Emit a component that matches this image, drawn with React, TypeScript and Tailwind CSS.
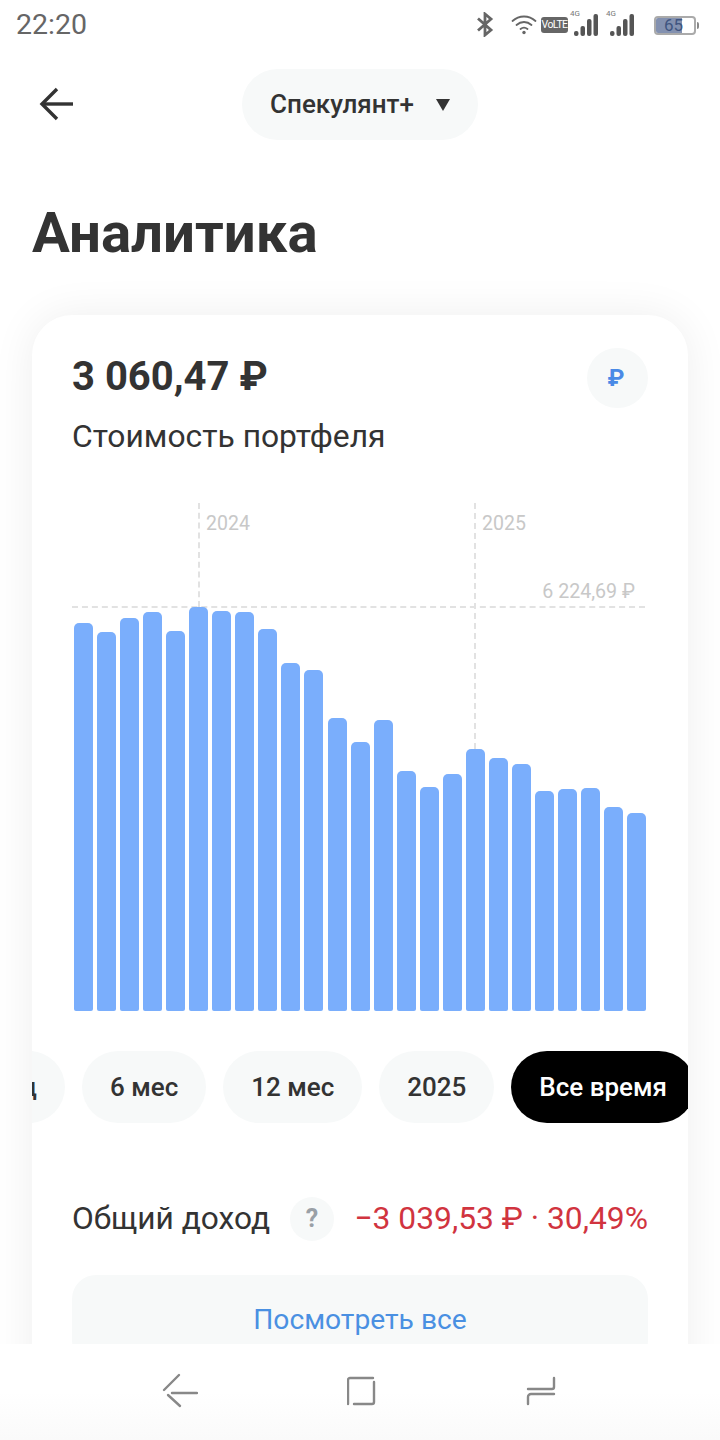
const bars = [623, 632, 618, 612, 631, 607, 611, 612, 629, 663, 670, 718, 742, 720, 771, 787, 774, 749, 758, 764, 791, 789, 788, 807, 813];
const periods = ['Месяц', '6 мес', '12 мес', '2025'];

function Signal() {
  return (
    <div className="relative h-[22px] w-[24px]">
      <span className="absolute -left-[4px] -top-[5px] text-[8px] leading-[10px] text-[#777]">4G</span>
      <svg width="24" height="22" viewBox="0 0 24 22" fill="#555">
        <rect x="0" y="17" width="4.500" height="5" rx="2" />
        <rect x="6.500" y="12" width="4.500" height="10" rx="2" />
        <rect x="13" y="5" width="4.500" height="17" rx="2" />
        <rect x="19.500" y="0" width="4.500" height="22" rx="2" />
      </svg>
    </div>
  );
}

function StatusBar() {
  return (
    <div className="flex h-[50px] items-center justify-between pl-4 pr-[21px] text-[#666]">
      <span className="text-[28.500px] leading-none">22:20</span>
      <div className="flex items-center">
        <svg width="18" height="25" viewBox="0 0 18 25" fill="none" stroke="#666" strokeWidth="2.800" className="mb-[1px]">
          <path d="M2 6.500l13 11.500-6 5V2l6 5L2 18.500" />
        </svg>
        <svg width="26" height="20" viewBox="0 0 26 20" fill="none" stroke="#666" strokeWidth="1.800" strokeLinecap="round" className="ml-[17px]">
          <path d="M1.500 6c6.500-6 16.500-6 23 0" />
          <path d="M5.500 10c4.500-4 10.500-4 15 0" />
          <path d="M9.500 14c2.500-2 4.500-2 7 0" />
          <circle cx="13" cy="17.500" r="1.700" fill="#666" stroke="none" />
        </svg>
        <span className="ml-[4px] flex h-[16px] w-[27px] items-center justify-center overflow-hidden rounded-[3px] bg-[#666] text-[10.500px] leading-none tracking-[-0.6px] text-white">VoLTE</span>
        <div className="ml-[6px]"><Signal /></div>
        <div className="ml-[12px]"><Signal /></div>
        <div className="relative ml-[20px] flex h-[19px] w-[42px] items-center overflow-hidden rounded-[4px] border-2 border-[#aaa]">
          <div className="h-full w-[26px] bg-[#8391b0]" />
          <span className="absolute left-[8px] text-[17px] leading-none text-[#3f5580]">65</span>
        </div>
        <div className="ml-[1px] h-[7px] w-[2px] rounded-r-sm bg-[#888]" />
      </div>
    </div>
  );
}

export default function App() {
  return (
    <div className="relative flex h-[1440px] w-[720px] flex-col overflow-hidden bg-white font-['Roboto',sans-serif] text-[#333]">
      <StatusBar />
      <div className="relative mt-[19px] flex h-[71px] items-center justify-center">
        <svg width="36" height="34" viewBox="0 0 36 34" fill="none" stroke="#333" strokeWidth="3.400" className="absolute left-[39px] top-[18px]">
          <path d="M34 17H3" />
          <path d="M18 2L3 17l15 15" />
        </svg>
        <button className="flex h-[71px] w-[236px] items-center justify-center gap-[22px] rounded-[36px] bg-[#f7f9f9] text-[26px] font-medium">
          Спекулянт+
          <svg width="14" height="12" viewBox="0 0 14 12" fill="#333"><path d="M0 0h14L7 12z" /></svg>
        </button>
      </div>
      <h1 className="ml-[32px] mt-[61px] text-[56.400px] font-bold leading-[64px]">Аналитика</h1>
      <div className="mx-[32px] mt-[50px] h-[1100px] shrink-0 overflow-hidden rounded-[40px] bg-white shadow-[0_0_44px_rgba(0,0,0,0.07)]">
        <div className="flex items-start justify-between pl-[40px] pr-[40px] pt-[33px]">
          <div>
            <div className="text-[40px] font-bold leading-[58px]">3 060,47 ₽</div>
            <div className="mt-[10px] text-[31.800px] leading-[40px]">Стоимость портфеля</div>
          </div>
          <div className="flex h-[60px] w-[61px] items-center justify-center rounded-full bg-[#f7f9f9] pr-[3px] text-[24px] font-bold text-[#4a8ae6]">₽</div>
        </div>
        <div className="relative ml-[40px] mt-[47px] h-[508px] w-[576px]">
          <div className="absolute bottom-[404px] left-[126px] top-0 border-l-2 border-dashed border-[#e2e2e2]" />
          <div className="absolute bottom-[262px] left-[402px] top-0 border-l-2 border-dashed border-[#e2e2e2]" />
          <div className="absolute left-0 right-[3px] top-[103px] border-t-2 border-dashed border-[#e2e2e2]" />
          <span className="absolute left-[134px] top-[10px] text-[19.500px] leading-[22px] text-[#c8c8c8]">2024</span>
          <span className="absolute left-[410px] top-[10px] text-[19.500px] leading-[22px] text-[#c8c8c8]">2025</span>
          <span className="absolute right-[13px] top-[78px] text-[19.600px] leading-[22px] text-[#c8c8c8]">6 224,69 ₽</span>
          <div className="absolute bottom-0 left-[2px] flex h-[404px] items-end gap-[4.050px]">
            {bars.map((top, i) => (
              <div key={i} className="w-[19px] rounded-t-[5px] rounded-b-[2px] bg-[#7aaefc]" style={{ height: 1011 - top }} />
            ))}
          </div>
        </div>
        <div className="mt-[40px] flex justify-end gap-[17px] overflow-hidden">
          {periods.map((p) => (
            <div key={p} className="flex h-[72px] shrink-0 items-center justify-center rounded-[36px] bg-[#f7f9f9] px-[28px] text-[26px] font-medium">
              {p}
            </div>
          ))}
          <div className="-mr-[7px] flex h-[72px] shrink-0 items-center justify-center rounded-[36px] bg-black px-[28px] text-[26px] font-medium text-white">
            Все время
          </div>
        </div>
        <div className="mt-[74px] flex h-[44px] items-center pl-[40px] pr-[40px]">
          <span className="text-[31.700px]">Общий доход</span>
          <div className="ml-[20px] flex h-[44px] w-[44px] items-center justify-center rounded-full bg-[#f7f9f9] text-[25px] font-bold text-[#9aa0a6]">?</div>
          <span className="ml-auto whitespace-nowrap text-[31.800px] text-[#d1343f]">−3 039,53 ₽ · 30,49%</span>
        </div>
        <div className="mx-[40px] mt-[34px] flex h-[90px] items-start justify-center rounded-[24px] bg-[#f7f9f9] pt-[28px] text-[28.200px] leading-[34px] text-[#4a90e2]">
          Посмотреть все
        </div>
      </div>
      <nav className="absolute bottom-0 left-0 right-0 flex h-[96px] items-center justify-between bg-gradient-to-b from-white from-50% to-[#fafafa] pb-[2px] pl-[162px] pr-[164px]">
        <svg width="36" height="36" viewBox="0 0 36 36" fill="none" stroke="#888" strokeWidth="2.400" strokeLinecap="round">
          <path d="M17 2L2 17" />
          <path d="M35 20H10" />
          <path d="M6 22l12 11" />
        </svg>
        <svg width="30" height="30" viewBox="0 0 30 30" fill="none" stroke="#888" strokeWidth="2.400" strokeLinecap="round" strokeLinejoin="round">
          <path d="M1 28V4a2 2 0 012-2h23" />
          <path d="M27 6v20a2 2 0 01-2 2H7" />
        </svg>
        <svg width="30" height="32" viewBox="0 0 30 32" fill="none" stroke="#888" strokeWidth="2.400" strokeLinecap="round" strokeLinejoin="round">
          <path d="M2 14h24a2 2 0 002-2V3" />
          <path d="M28 19H5a3 3 0 00-3 3v7" />
        </svg>
      </nav>
    </div>
  );
}
